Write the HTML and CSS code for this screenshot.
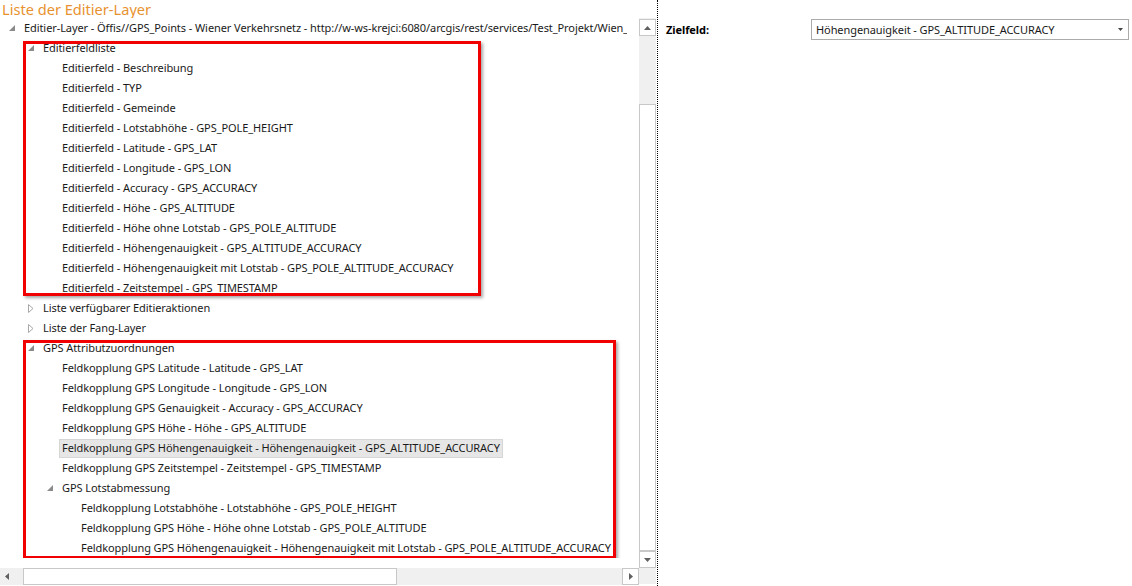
FILE: index.html
```html
<!DOCTYPE html>
<html lang="de">
<head>
<meta charset="utf-8">
<title>Liste der Editier-Layer</title>
<link rel="stylesheet" href="styles.css">
</head>
<body>
<div class="app">
  <section class="left">
    <h1 class="title">Liste der Editier-Layer</h1>
    <div class="frame">
      <div class="tree">
        <div class="tree-body">
        <div class="row lvl1"><span class="tog"><svg class="exp" width="6" height="6" viewBox="0 0 6 6"><path d="M6 0V6H0Z"/></svg></span><span class="lbl lbl-clip">Editier-Layer - Öffis//GPS_Points - Wiener Verkehrsnetz - http://w-ws-krejci:6080/arcgis/rest/services/Test_Projekt/Wien_Verkehrsnetz/FeatureServer</span></div>
        <div class="group group-a">
          <div class="row lvl2"><span class="tog"><svg class="exp" width="6" height="6" viewBox="0 0 6 6"><path d="M6 0V6H0Z"/></svg></span><span class="lbl">Editierfeldliste</span></div>
          <div class="row lvl3"><span class="tog"></span><span class="lbl">Editierfeld - Beschreibung</span></div>
          <div class="row lvl3"><span class="tog"></span><span class="lbl">Editierfeld - TYP</span></div>
          <div class="row lvl3"><span class="tog"></span><span class="lbl">Editierfeld - Gemeinde</span></div>
          <div class="row lvl3"><span class="tog"></span><span class="lbl">Editierfeld - Lotstabhöhe - GPS_POLE_HEIGHT</span></div>
          <div class="row lvl3"><span class="tog"></span><span class="lbl">Editierfeld - Latitude - GPS_LAT</span></div>
          <div class="row lvl3"><span class="tog"></span><span class="lbl">Editierfeld - Longitude - GPS_LON</span></div>
          <div class="row lvl3"><span class="tog"></span><span class="lbl">Editierfeld - Accuracy - GPS_ACCURACY</span></div>
          <div class="row lvl3"><span class="tog"></span><span class="lbl">Editierfeld - Höhe - GPS_ALTITUDE</span></div>
          <div class="row lvl3"><span class="tog"></span><span class="lbl">Editierfeld - Höhe ohne Lotstab - GPS_POLE_ALTITUDE</span></div>
          <div class="row lvl3"><span class="tog"></span><span class="lbl">Editierfeld - Höhengenauigkeit - GPS_ALTITUDE_ACCURACY</span></div>
          <div class="row lvl3"><span class="tog"></span><span class="lbl">Editierfeld - Höhengenauigkeit mit Lotstab - GPS_POLE_ALTITUDE_ACCURACY</span></div>
          <div class="row lvl3"><span class="tog"></span><span class="lbl">Editierfeld - Zeitstempel - GPS_TIMESTAMP</span></div>
        </div>
        <div class="row lvl2"><span class="tog"><svg class="col" width="6" height="9" viewBox="0 0 6 9"><path d="M0.5 0.5L5 4.5L0.5 8.5Z"/></svg></span><span class="lbl">Liste verfügbarer Editieraktionen</span></div>
        <div class="row lvl2"><span class="tog"><svg class="col" width="6" height="9" viewBox="0 0 6 9"><path d="M0.5 0.5L5 4.5L0.5 8.5Z"/></svg></span><span class="lbl">Liste der Fang-Layer</span></div>
        <div class="group group-b">
          <div class="row lvl2"><span class="tog"><svg class="exp" width="6" height="6" viewBox="0 0 6 6"><path d="M6 0V6H0Z"/></svg></span><span class="lbl">GPS Attributzuordnungen</span></div>
          <div class="row lvl3"><span class="tog"></span><span class="lbl">Feldkopplung GPS Latitude - Latitude - GPS_LAT</span></div>
          <div class="row lvl3"><span class="tog"></span><span class="lbl">Feldkopplung GPS Longitude - Longitude - GPS_LON</span></div>
          <div class="row lvl3"><span class="tog"></span><span class="lbl">Feldkopplung GPS Genauigkeit - Accuracy - GPS_ACCURACY</span></div>
          <div class="row lvl3"><span class="tog"></span><span class="lbl">Feldkopplung GPS Höhe - Höhe - GPS_ALTITUDE</span></div>
          <div class="row lvl3"><span class="tog"></span><span class="lbl selected">Feldkopplung GPS Höhengenauigkeit - Höhengenauigkeit - GPS_ALTITUDE_ACCURACY</span></div>
          <div class="row lvl3"><span class="tog"></span><span class="lbl">Feldkopplung GPS Zeitstempel - Zeitstempel - GPS_TIMESTAMP</span></div>
          <div class="row lvl3"><span class="tog"><svg class="exp" width="6" height="6" viewBox="0 0 6 6"><path d="M6 0V6H0Z"/></svg></span><span class="lbl">GPS Lotstabmessung</span></div>
          <div class="row lvl4"><span class="tog"></span><span class="lbl">Feldkopplung Lotstabhöhe - Lotstabhöhe - GPS_POLE_HEIGHT</span></div>
          <div class="row lvl4"><span class="tog"></span><span class="lbl">Feldkopplung GPS Höhe - Höhe ohne Lotstab - GPS_POLE_ALTITUDE</span></div>
          <div class="row lvl4"><span class="tog"></span><span class="lbl">Feldkopplung GPS Höhengenauigkeit - Höhengenauigkeit mit Lotstab - GPS_POLE_ALTITUDE_ACCURACY</span></div>
        </div>
        </div>
      </div>
      <div class="vscroll">
        <div class="sbtn"><svg width="7" height="4" viewBox="0 0 7 4"><path d="M3.5 0L7 4H0Z"/></svg></div>
        <div class="vtrack"><div class="vthumb"></div></div>
        <div class="sbtn"><svg width="7" height="4" viewBox="0 0 7 4"><path d="M0 0H7L3.5 4Z"/></svg></div>
      </div>
      <div class="hscroll">
        <div class="sbtn sbtn-left"><svg width="4" height="7" viewBox="0 0 4 7"><path d="M4 0V7L0 3.5Z"/></svg></div>
        <div class="htrack"><div class="hthumb"></div></div>
        <div class="sbtn"><svg width="4" height="7" viewBox="0 0 4 7"><path d="M0 0L4 3.5L0 7Z"/></svg></div>
      </div>
      <div class="corner"></div>
    </div>
  </section>
  <div class="divider"></div>
  <section class="right">
    <div class="field">
      <div class="field-label">Zielfeld:</div>
      <div class="select">
        <span class="select-text">Höhengenauigkeit - GPS_ALTITUDE_ACCURACY</span>
        <svg class="select-arrow" width="5" height="3" viewBox="0 0 5 3"><path d="M0 0H5L2.5 3Z"/></svg>
      </div>
    </div>
  </section>
</div>
</body>
</html>
```
FILE: styles.css
```css
html, body {
  margin: 0;
  padding: 0;
  background: #fff;
}
body {
  font-family: "Noto Sans", "Open Sans", sans-serif;
  font-size: 11px;
  letter-spacing: -0.08px;
  color: #1a1a1a;
}
.app {
  display: flex;
  width: 1132px;
  height: 586px;
  overflow: hidden;
}
.left {
  width: 656px;
  flex: none;
  display: flex;
  flex-direction: column;
}
.title {
  margin: 0;
  height: 18px;
  padding-left: 2px;
  font-weight: normal;
  font-size: 14.6px;
  letter-spacing: 0;
  line-height: 18px;
  color: #e8922f;
  white-space: nowrap;
}
.frame {
  display: grid;
  grid-template-columns: 639px 17px;
  grid-template-rows: 550px 16px;
}
.tree {
  overflow: hidden;
  background: #fff;
}
.tree-body {
  width: 628px;
  overflow: hidden;
}
.row {
  height: 20px;
  display: flex;
  align-items: center;
  white-space: nowrap;
}
.lvl1 { padding-left: 5px; }
.lvl2 { padding-left: 24px; }
.lvl3 { padding-left: 43px; }
.lvl4 { padding-left: 62px; }
.tog {
  width: 19px;
  flex: none;
  height: 20px;
  display: flex;
  align-items: center;
  padding-left: 4px;
  box-sizing: border-box;
}
.exp path { fill: #8a8a8a; }
.col path { fill: #fff; stroke: #a8a8a8; stroke-width: 1; }
.lbl {
  line-height: 15px;
  padding: 0 2px 2px 2px;
  margin-left: -3px;
  border: 1px solid transparent;
}
.lbl-clip {
  min-width: 0;
  overflow: hidden;
}
.lbl.selected {
  background: #e6e6e6;
  border-color: #d6d6d6;
}
.group {
  position: relative;
}
.group::after {
  content: "";
  position: absolute;
  left: 23px;
  border: 3px solid #f00000;
  box-shadow: 2px 2px 3px rgba(0, 0, 0, 0.35);
  pointer-events: none;
}
.group-a::after {
  top: 3px;
  bottom: 2px;
  width: 452px;
}
.group-b::after {
  top: 2px;
  bottom: -1px;
  width: 587px;
}
.vscroll {
  background: #f0f0f0;
  display: flex;
  flex-direction: column;
  padding-top: 1px;
}
.sbtn {
  width: 17px;
  height: 17px;
  flex: none;
  box-sizing: border-box;
  border: 1px solid #c8c8c8;
  background: #fff;
  display: flex;
  align-items: center;
  justify-content: center;
}
.sbtn path { fill: #606060; }
.vtrack {
  flex: 1;
  display: flex;
  flex-direction: column;
  padding-top: 68px;
}
.vthumb {
  flex: 1;
  background: #fff;
  border: 1px solid #c8c8c8;
}
.hscroll {
  background: #f0f0f0;
  display: flex;
  height: 17px;
}
.hscroll .sbtn-left {
  width: 14px;
  border: none;
  background: #f0f0f0;
}
.htrack {
  flex: 1;
  padding-left: 9px;
  display: flex;
}
.hthumb {
  width: 374px;
  box-sizing: border-box;
  background: #fff;
  border: 1px solid #c8c8c8;
}
.corner {
  background: #f0f0f0;
}
.divider {
  width: 2px;
  margin-left: 1px;
  flex: none;
  border-left: 1px dotted #000;
  box-sizing: border-box;
}
.right {
  flex: 1;
  padding: 19px 3px 0 7px;
}
.field {
  display: flex;
  align-items: center;
  height: 21px;
}
.field-label {
  width: 145px;
  flex: none;
  font-weight: bold;
  color: #000;
}
.select {
  flex: 1;
  height: 21px;
  box-sizing: border-box;
  border: 1px solid #ababab;
  display: flex;
  align-items: center;
  padding: 0 5px 0 4px;
}
.select-text {
  flex: 1;
  white-space: nowrap;
}
.select-arrow path { fill: #444; }
```
